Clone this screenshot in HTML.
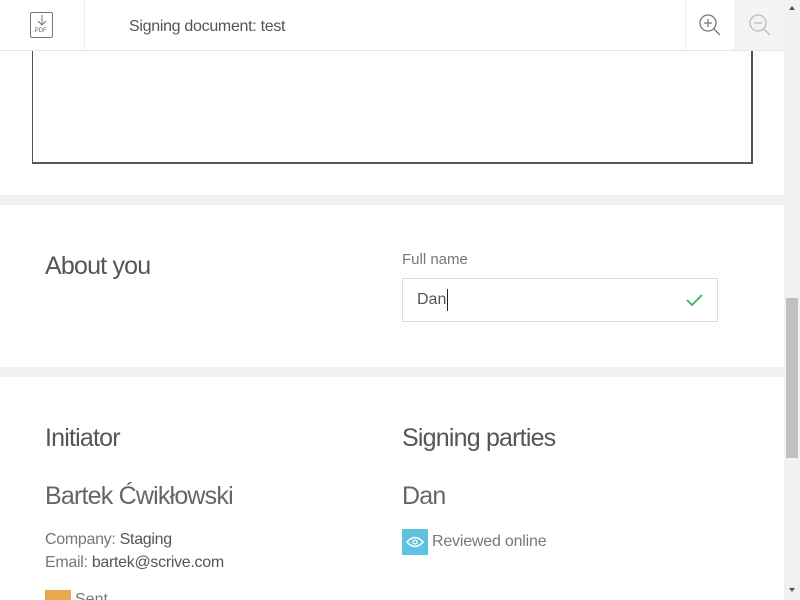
<!DOCTYPE html>
<html style="width:800px;height:600px;overflow:hidden"><head><meta charset="utf-8"><style>
*{margin:0;padding:0;box-sizing:border-box}
body{width:800px;height:600px;overflow:hidden;background:#fff;font-family:"Liberation Sans",sans-serif;color:#555;position:relative}
.abs{position:absolute}
</style></head><body>
<div class="abs" style="left:0;top:0;width:784px;height:51px;border-bottom:1px solid #e6e6e6;background:#fff"></div>
<div class="abs" style="left:84px;top:0;width:1px;height:50px;background:#ececec"></div>
<div class="abs" style="left:30px;top:12px;width:23px;height:26px;border:1px solid #777;border-radius:2px"></div>
<svg class="abs" style="left:30px;top:12px" width="24" height="27"><path d="M12 3v10M8 9l4 4 4-4" stroke="#777" stroke-width="1" fill="none"/></svg>
<div class="abs" style="left:33px;top:28px;font-size:6px;color:#666">.PDF</div>
<div class="abs" style="left:129px;top:18px;font-size:16px;color:#555;letter-spacing:-0.3px">Signing document: test</div>
<div class="abs" style="left:685px;top:0;width:1px;height:50px;background:#ececec"></div>
<div class="abs" style="left:734px;top:0;width:50px;height:50px;background:#f4f4f4"></div>
<svg class="abs" style="left:698px;top:13px" width="26" height="26"><circle cx="10" cy="10" r="8" stroke="#777" stroke-width="1.3" fill="none"/><path d="M10 6v8M6 10h8M16 16l6 6" stroke="#777" stroke-width="1.3"/></svg>
<svg class="abs" style="left:748px;top:13px" width="26" height="26"><circle cx="10" cy="10" r="8" stroke="#bbb" stroke-width="1.3" fill="none"/><path d="M6 10h8M16 16l6 6" stroke="#bbb" stroke-width="1.3"/></svg>
<div class="abs" style="left:32px;top:51px;width:721px;height:113px;border:1px solid #555;border-top:none;border-right:2px solid #555;border-bottom:2px solid #555"></div>
<div class="abs" style="left:0;top:195px;width:784px;height:10px;background:#f0f0f0"></div>
<div class="abs" style="left:45px;top:252px;font-size:25px;color:#555;letter-spacing:-0.8px">About you</div>
<div class="abs" style="left:402px;top:251px;font-size:15px;color:#777">Full name</div>
<div class="abs" style="left:402px;top:278px;width:316px;height:44px;border:1px solid #ddd"></div>
<div class="abs" style="left:417px;top:291px;font-size:16px;color:#555">Dan</div>
<div class="abs" style="left:447px;top:289px;width:1px;height:22px;background:#222"></div>
<svg class="abs" style="left:685px;top:292px" width="20" height="16"><path d="M2 8l5 5 10-10" stroke="#4cb877" stroke-width="2" fill="none"/></svg>
<div class="abs" style="left:0;top:367px;width:784px;height:10px;background:#f0f0f0"></div>
<div class="abs" style="left:45px;top:424px;font-size:25px;color:#555;letter-spacing:-0.8px">Initiator</div>
<div class="abs" style="left:402px;top:424px;font-size:25px;color:#555;letter-spacing:-0.8px">Signing parties</div>
<div class="abs" style="left:45px;top:482px;font-size:25px;color:#666;letter-spacing:-0.8px">Bartek Ćwikłowski</div>
<div class="abs" style="left:402px;top:482px;font-size:25px;color:#666;letter-spacing:-0.8px">Dan</div>
<div class="abs" style="left:45px;top:528px;font-size:16px;line-height:23px;color:#777;letter-spacing:-0.3px">Company: <span style="color:#555">Staging</span><br>Email: <span style="color:#555">bartek@scrive.com</span></div>
<div class="abs" style="left:45px;top:590px;width:26px;height:10px;background:#eaa84c"></div>
<div class="abs" style="left:75px;top:591px;font-size:16px;color:#777">Sent</div>
<div class="abs" style="left:402px;top:529px;width:26px;height:26px;background:#5ec3df"></div>
<svg class="abs" style="left:402px;top:529px" width="26" height="26"><path d="M5 13q8-9 16 0q-8 9-16 0z" stroke="#fff" stroke-width="1.5" fill="none"/><circle cx="13" cy="13" r="2" stroke="#fff" stroke-width="1.3" fill="none"/></svg>
<div class="abs" style="left:432px;top:533px;font-size:16px;color:#777;letter-spacing:-0.2px">Reviewed online</div>
<div class="abs" style="left:784px;top:0;width:16px;height:600px;background:#f1f1f1"></div>
<div class="abs" style="left:786px;top:298px;width:12px;height:160px;background:#c1c1c1"></div>
<svg class="abs" style="left:784px;top:0" width="16" height="600"><path d="M5 10l3-4 3 4z" fill="#555"/><path d="M5 588l3 4 3-4z" fill="#555"/></svg>
</body></html>
